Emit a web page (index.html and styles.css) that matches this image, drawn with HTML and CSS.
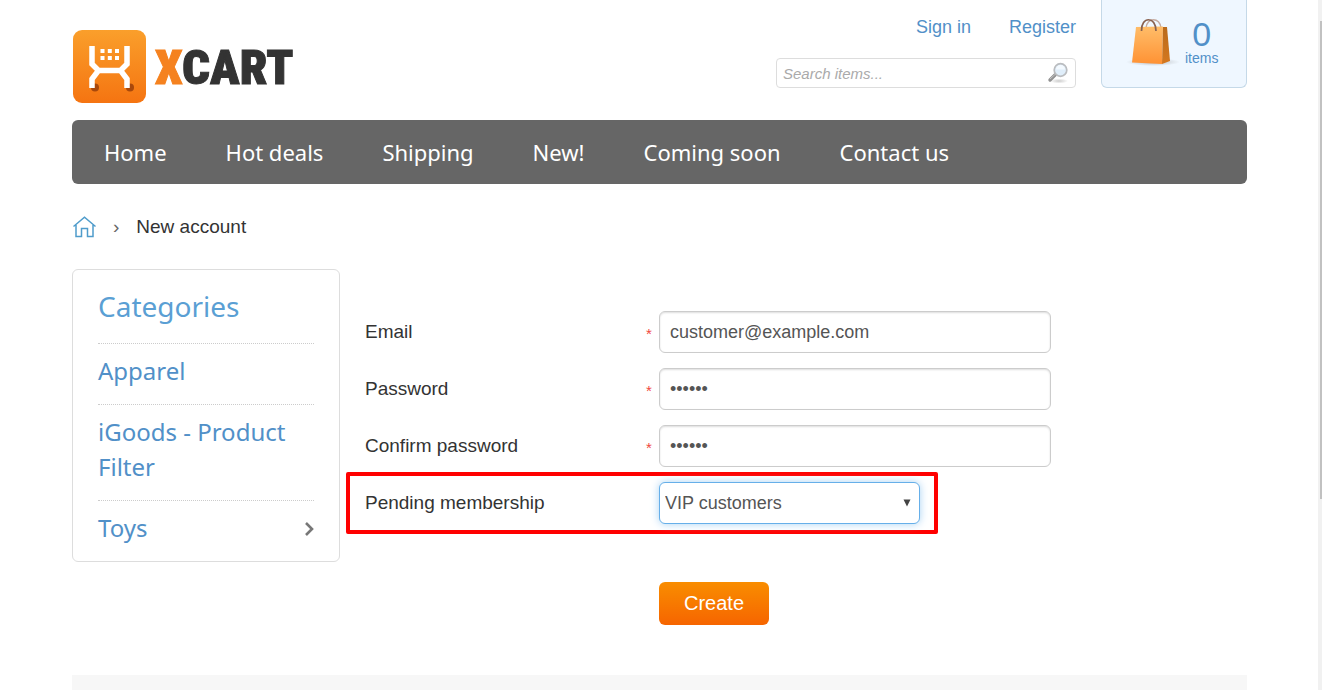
FILE: index.html
```html
<!DOCTYPE html>
<html lang="en">
<head>
<meta charset="utf-8">
<title>New account</title>
<link rel="stylesheet" href="styles.css">
</head>
<body>
<div class="page">
  <header class="header">
    <a class="logo" href="#" aria-label="XCART">
      <svg class="logo-mark" viewBox="0 0 73 73" aria-hidden="true">
        <defs><linearGradient id="lg" x1="0" y1="0" x2="0" y2="1"><stop offset="0" stop-color="#fa9f2b"/><stop offset="1" stop-color="#f57411"/></linearGradient></defs>
        <rect width="73" height="73" rx="9" fill="url(#lg)"/>
        <circle cx="22" cy="57.500" r="4" fill="#a8480c"/><circle cx="57" cy="57.500" r="4" fill="#a8480c"/>
        <path d="M19 16V34L25.500 40.500L19 49V58M54 16V34L47.500 40.500L54 49V58M23 40.500H50" fill="none" stroke="#fff" stroke-width="5.500"/>
        <path d="M27.500 19h4v4h-4zM34.800 19h4v4h-4zM42 19h4v4h-4zM27.500 26h4v4h-4zM34.800 26h4v4h-4zM42 26h4v4h-4z" fill="#fff"/>
      </svg>
      <span class="logo-text"><span class="logo-x">X</span>CART</span>
    </a>
    <div class="tools">
      <nav class="account"><a href="#">Sign in</a><a href="#">Register</a></nav>
      <form class="search">
        <input class="search-input" type="search" placeholder="Search items..." aria-label="Search items">
        <button class="search-button" type="button" aria-label="Search">
          <svg viewBox="0 0 22 22" width="22" height="22">
            <defs><radialGradient id="sh"><stop offset="0" stop-color="#ccc"/><stop offset="1" stop-color="#ccc" stop-opacity="0"/></radialGradient></defs>
            <ellipse cx="12" cy="19" rx="9" ry="2.500" fill="url(#sh)"/>
            <path d="M8.500 12.500L3 18" stroke="#929292" stroke-width="3.400" stroke-linecap="round"/>
            <path d="M8 12.500L3 17" stroke="#c4c4c4" stroke-width="1"/>
            <circle cx="13.500" cy="8" r="6.300" fill="#e0eefa" stroke="#bbbdc0" stroke-width="1.700"/>
            <path d="M9 7.500a4.500 4.500 0 0 1 9 0z" fill="#f4faff"/>
          </svg>
        </button>
      </form>
    </div>
    <a class="cart" href="#">
      <svg width="54" height="50" viewBox="0 0 54 50" aria-hidden="true">
        <defs>
          <linearGradient id="bag" x1="0" y1="0" x2="0" y2="1"><stop offset="0" stop-color="#ffbd69"/><stop offset="1" stop-color="#ff9234"/></linearGradient>
          <linearGradient id="side" x1="0" y1="0" x2="0" y2="1"><stop offset="0" stop-color="#b96a1b"/><stop offset="1" stop-color="#d5781f"/></linearGradient>
          <radialGradient id="bs"><stop offset="0" stop-color="#b8bbc0"/><stop offset="1" stop-color="#b8bbc0" stop-opacity="0"/></radialGradient>
        </defs>
        <ellipse cx="27" cy="45" rx="27" ry="4" fill="url(#bs)"/>
        <path d="M20 11C21 0 34 0 35 11" fill="none" stroke="#c4aaa0" stroke-width="1.500"/>
        <path d="M10 10L37 9.500L36 47L6 45.500Z" fill="url(#bag)"/>
        <path d="M37 10L41 10L44 44L36 47Z" fill="url(#side)"/>
        <path d="M15.500 14C15 -1 30 -1 30 14" fill="none" stroke="#88604f" stroke-width="1.700"/>
      </svg>
      <span class="cart-info"><span class="cart-count">0</span><span class="cart-label">items</span></span>
    </a>
  </header>

  <nav class="menu">
    <a href="#">Home</a><a href="#">Hot deals</a><a href="#">Shipping</a><a href="#">New!</a><a href="#">Coming soon</a><a href="#">Contact us</a>
  </nav>

  <nav class="crumbs" aria-label="Breadcrumb">
    <a class="crumb-home" href="#" aria-label="Home">
      <svg width="25" height="22" viewBox="0 0 25 22" fill="none" stroke="#4f9ccb" stroke-width="1.500"><path d="M1.500 10.500L12.500 1.200L23.500 10.500M4 9V20.500H9.500V12.500H15.500V20.500H21V9"/></svg>
    </a>
    <span class="crumb-sep">›</span>
    <span>New account</span>
  </nav>

  <div class="columns">
    <aside class="sidebar">
      <h2 class="sidebar-title">Categories</h2>
      <ul class="categories">
        <li><a href="#">Apparel</a></li>
        <li><a href="#">iGoods - Product Filter</a></li>
        <li><a href="#">Toys</a>
          <svg width="10" height="16" viewBox="0 0 10 16" fill="none" stroke="#777" stroke-width="2.600" aria-hidden="true"><path d="M2 3L8 9L2 15"/></svg>
        </li>
      </ul>
    </aside>
    <main class="main">
      <form class="form">
        <div class="row">
          <label for="email">Email</label><span class="required">*</span>
          <input class="field" id="email" type="email" value="customer@example.com">
        </div>
        <div class="row">
          <label for="password">Password</label><span class="required">*</span>
          <input class="field" id="password" type="password" value="secret">
        </div>
        <div class="row">
          <label for="confirm">Confirm password</label><span class="required">*</span>
          <input class="field" id="confirm" type="password" value="secret">
        </div>
        <div class="row row-marked">
          <label for="membership">Pending membership</label><span></span>
          <div class="select-wrap">
            <select class="field field-active" id="membership"><option>VIP customers</option></select>
            <svg class="arrow" width="8" height="8" viewBox="0 0 8 8" aria-hidden="true"><path d="M0.500 0.500H7.500L4 7.500Z" fill="#444"/></svg>
          </div>
        </div>
        <div class="row row-submit">
          <button class="create" type="button">Create</button>
        </div>
      </form>
    </main>
  </div>
  <footer class="footer"></footer>
</div>
<div class="scrollbar" aria-hidden="true"><div class="thumb"></div></div>
</body>
</html>
```
FILE: styles.css
```css
*, *::before { box-sizing: border-box; }
body {
  margin: 0;
  display: flex;
  min-height: 100vh;
  background: #fff;
  color: #333;
  font-family: "Liberation Sans", Arial, sans-serif;
  font-size: 19px;
}
a { color: #5190c8; text-decoration: none; }
svg { display: block; }
.page {
  flex: 1;
  min-width: 0;
  padding: 0 71px 0 72px;
  display: flex;
  flex-direction: column;
}
.header { display: flex; align-items: flex-start; gap: 25px; min-height: 120px; }
.logo { display: flex; align-items: flex-start; gap: 9px; margin: 30px auto 0 1px; }
.logo-mark { width: 73px; height: 73px; }
.logo-text {
  color: #333;
  font-family: "Roboto Condensed", Roboto, sans-serif;
  font-weight: 900;
  font-size: 49px;
  line-height: 76px;
  -webkit-text-stroke: 1px;
}
.logo-x { color: #f5821f; }
.tools { width: 300px; padding-top: 16px; }
.account {
  display: flex;
  justify-content: flex-end;
  gap: 38px;
  font-size: 18px;
  line-height: 22px;
}
.search {
  display: flex;
  align-items: center;
  height: 30px;
  margin-top: 20px;
  border: 1px solid #ddd;
  border-radius: 4px;
}
.search-input {
  flex: 1;
  min-width: 0;
  border: 0;
  padding: 0 6px;
  background: none;
  font: italic 15px "Liberation Sans", Arial, sans-serif;
}
.search-input::placeholder { color: #aaa; }
.search-button { border: 0; padding: 0 6px; background: none; }
.cart {
  display: flex;
  width: 146px;
  height: 88px;
  padding: 17px 0 0 24px;
  gap: 5px;
  background: #eff7ff;
  border: 1px solid #c5d9e8;
  border-top: 0;
  border-radius: 0 0 6px 6px;
}
.cart-info { display: flex; flex-direction: column; align-items: center; }
.cart-count { font-size: 34px; line-height: 35px; }
.cart-label { font-size: 14px; line-height: 13px; }
.menu {
  display: flex;
  align-items: center;
  gap: 59px;
  height: 64px;
  padding: 0 32px;
  border-radius: 6px;
  background: #666;
  font-family: "Noto Sans", sans-serif;
  font-size: 22px;
}
.menu a { color: #fff; white-space: nowrap; }
.crumbs { display: flex; align-items: center; height: 85px; }
.crumb-sep { margin: 0 17px 0 16px; color: #666; }
.columns { display: flex; align-items: flex-start; gap: 25px; }
.sidebar {
  flex: none;
  width: 268px;
  padding: 0 25px;
  border: 1px solid #ddd;
  border-radius: 6px;
  font-family: "Noto Sans", sans-serif;
}
.sidebar-title {
  margin: 0;
  padding-bottom: 1px;
  color: #5a9fd4;
  font-weight: normal;
  font-size: 28px;
  line-height: 72px;
}
.categories { list-style: none; margin: 0; padding: 0; font-size: 24px; line-height: 35px; }
.categories li {
  display: flex;
  align-items: center;
  justify-content: space-between;
  padding: 9px 0 16px;
  border-top: 1px dotted #ccc;
}
.main { flex: 1; min-width: 0; }
.form { display: flex; flex-direction: column; gap: 15px; padding-top: 42px; }
.row {
  position: relative;
  display: grid;
  grid-template-columns: minmax(0, 281fr) 13fr minmax(0, 392fr) 196fr;
  align-items: center;
}
.required { padding-top: 4px; color: #f0483e; font-size: 15px; line-height: 14px; }
.field {
  width: 100%;
  height: 42px;
  padding: 0 10px;
  border: 1px solid #ccc;
  border-radius: 6px;
  background: #fff;
  box-shadow: inset 0 1px 2px #ddd;
  color: #555;
  font: 18px "Liberation Sans", Arial, sans-serif;
}
.select-wrap { position: relative; width: 261px; max-width: 100%; }
.field-active {
  appearance: none;
  display: block;
  padding: 0 5px;
  border-color: #66afe9;
  box-shadow: 0 0 8px #a9d3f3;
}
.arrow { position: absolute; right: 9px; top: 17px; pointer-events: none; }
.row-marked::before {
  content: "";
  position: absolute;
  left: -19px;
  top: -10px;
  width: 592px;
  height: 62px;
  border: 4px solid #f00;
  border-radius: 2px;
  pointer-events: none;
}
.row-submit { margin-top: 43px; }
.create {
  grid-column: 3;
  justify-self: start;
  width: 110px;
  height: 43px;
  border: 0;
  border-radius: 6px;
  background: linear-gradient(#f98d00, #f66500);
  color: #fff;
  font: 20px "Liberation Sans", Arial, sans-serif;
}
.footer { flex: 1; min-height: 15px; margin-top: 50px; background: #f7f7f7; }
.scrollbar { flex: none; width: 4px; padding: 21px 0 0 2px; background: #f1f1f1; }
.thumb { height: 478px; background: #c1c1c1; }
```
